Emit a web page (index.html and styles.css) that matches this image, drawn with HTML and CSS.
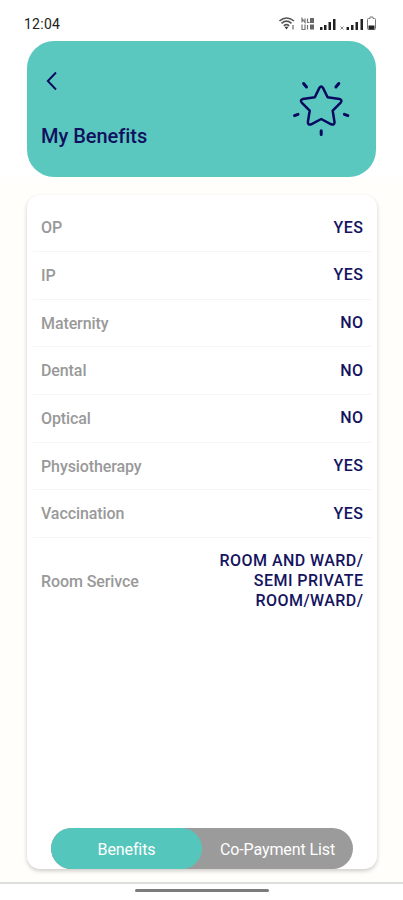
FILE: index.html
```html
<!DOCTYPE html>
<html lang="en">
<head>
<meta charset="utf-8">
<title>My Benefits</title>
<link rel="stylesheet" href="styles.css">
</head>
<body>
<div class="top">
  <div class="status">
    <span class="time">12:04</span>
    <svg class="status-icons" width="98" height="16" viewBox="0 0 98 16">
      <g fill="none" stroke="#555" stroke-width="1.6">
        <path d="M.5 5Q7.500 -1 15 5M2.500 7.300Q7.500 3 12.500 7.300M4.800 9.800Q7.500 7.500 10.200 9.800"/>
      </g>
      <path d="M5.500 10.800h4l-2 2.700z" fill="#333"/>
      <path d="M14 9v4.500" stroke="#888" stroke-width="1.500"/>
      <g fill="none" stroke="#777" stroke-width="1.200">
        <path d="M23 6.500V2.500l3 4v-4M23 8.500v5h3v-5M28.500 2.500v4h2M28.500 9v4.500"/>
      </g>
      <path d="M31 2h4v5h-4zM31 8.500h4v5h-4z" fill="#666"/>
      <path d="M41 11h2.500v3H41zM45 9h2.500v5H45zM49.500 6H52v8h-2.500zM54 3h2.500v11H54z" fill="#222"/>
      <path d="M61.500 10.500l3 3m0-3l-3 3" stroke="#888" stroke-width="1"/>
      <path d="M67.500 11H70v3h-2.500zM72 9h2.500v5H72zM76.500 6H79v8h-2.500zM81.500 3H84v11h-2.500z" fill="#222"/>
      <path d="M89.500 2.500h1.500V1h3v1.500h1.500q1 0 1 1v9q0 1-1 1h-6q-1 0-1-1v-9q0-1 1-1z" fill="none" stroke="#777"/>
      <path d="M89.500 9.500h6v4h-6z" fill="#222"/>
    </svg>
  </div>
  <header class="hero">
    <div class="hero-left">
      <svg class="back" width="12" height="20" viewBox="0 0 12 20"><path d="M10 1.500L1.800 10L10 18.500" fill="none" stroke="#09095f" stroke-width="1.900"/></svg>
      <h1>My Benefits</h1>
    </div>
    <svg class="star" width="58" height="57" viewBox="0 0 58 57" fill="none" stroke="#09095f" stroke-linecap="round" stroke-linejoin="round">
      <path stroke-width="2.500" d="M27.400 6.900Q29.200 4 31 6.900L35.600 16.300L47.500 18Q50.700 19 48.700 21.600L40.700 29.700L42.500 41Q42.600 44.500 39.200 43.300L29.200 38L19.200 43.300Q15.800 44.500 15.900 41L17.700 29.700L9.700 21.600Q7.700 19 10.900 18L22.800 16.300Z"/>
      <path stroke-width="3" d="M11.600 2.500L14.500 6M46.800 2.500L43.900 6M2.500 34.600L6 33.300M55.900 34.600L52.400 33.300M29.200 49.800V53.500"/>
    </svg>
  </header>
</div>
<main class="page">
  <section class="card">
    <dl class="list">
      <div class="row"><dt>OP</dt><dd>YES</dd></div>
      <div class="row"><dt>IP</dt><dd>YES</dd></div>
      <div class="row"><dt>Maternity</dt><dd>NO</dd></div>
      <div class="row"><dt>Dental</dt><dd>NO</dd></div>
      <div class="row"><dt>Optical</dt><dd>NO</dd></div>
      <div class="row"><dt>Physiotherapy</dt><dd>YES</dd></div>
      <div class="row"><dt>Vaccination</dt><dd>YES</dd></div>
      <div class="row room"><dt>Room Serivce</dt><dd>ROOM AND WARD/<br>SEMI PRIVATE<br>ROOM/WARD/</dd></div>
    </dl>
    <nav class="tabs">
      <span class="tab active">Benefits</span>
      <span class="tab">Co-Payment List</span>
    </nav>
  </section>
</main>
<footer class="system"><div class="handle"></div></footer>
</body>
</html>
```
FILE: styles.css
```css
* { box-sizing: border-box; margin: 0; }
body {
  height: 900px;
  display: flex;
  flex-direction: column;
  overflow: hidden;
  background: #fff;
  font-family: Roboto, sans-serif;
}
.top { height: 177px; padding: 0 27px; }
.status {
  height: 41px;
  margin: 0 -1px 0 -3px;
  padding-top: 16px;
  display: flex;
  justify-content: space-between;
  align-items: flex-start;
}
.time { font-size: 14px; line-height: 16px; font-weight: 400; color: #222; letter-spacing: .25px; }
.status-icons { display: block; }
.hero {
  height: 136px;
  border-radius: 27px;
  background: #5bc8bf;
  display: flex;
  justify-content: space-between;
  padding: 30px 26px 0 14px;
}
.hero-left { display: flex; flex-direction: column; }
.back { margin-left: 5px; }
h1 {
  margin-top: 32px;
  font-size: 20px;
  line-height: 27px;
  font-weight: 500;
  color: #101060;
  letter-spacing: -.03px;
}
.star { margin-top: 10px; }
.page { flex: 1; padding: 18px 26px 13px 27px; background: #fffefa; }
.card {
  height: 674px;
  border-radius: 13px;
  background: #fff;
  box-shadow: 0 2px 4px rgba(0, 0, 0, .2);
  padding: 9.500px 6px 0;
  display: flex;
  flex-direction: column;
  justify-content: space-between;
}
.row {
  height: 47.650px;
  padding: 0 8px;
  display: flex;
  align-items: center;
  justify-content: space-between;
  border-bottom: 1px solid #f5f5f5;
}
.room { height: 87px; border: 0; }
dt { font-size: 16px; font-weight: 500; color: #999; letter-spacing: -.1px; }
dd { font-size: 16px; line-height: 20px; font-weight: 500; color: #14145f; text-align: right; letter-spacing: .45px; margin-right: -.45px; }
.tabs {
  width: 302px;
  height: 41px;
  margin-left: 18px;
  border-radius: 21px;
  background: #9b9b9b;
  display: flex;
}
.tab {
  flex: 1;
  line-height: 43px;
  text-align: center;
  font-size: 16px;
  letter-spacing: -.1px;
  color: #fff;
}
.active { border-radius: 21px; background: #55c6bc; }
.system {
  height: 18px;
  border-top: 2px solid #dededb;
  background: #fff;
  display: flex;
  justify-content: center;
  padding-top: 5px;
}
.handle { width: 134px; height: 3px; border-radius: 2px; background: #7c7c7c; }
```
